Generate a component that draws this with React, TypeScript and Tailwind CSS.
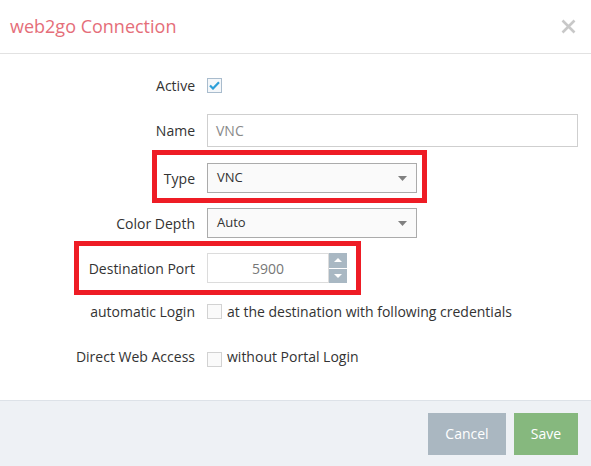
import { useState } from "react"

function Caret() {
  return (
    <svg width="9" height="5" viewBox="0 0 9 5" className="ml-auto">
      <path d="M0 0 L9 0 L4.5 5 Z" fill="#808080" />
    </svg>
  )
}

function Check({ checked, onChange }: { checked: boolean; onChange: () => void }) {
  return (
    <button
      type="button"
      onClick={onChange}
      className={`flex h-[15px] w-[15px] shrink-0 items-center justify-center border ${
        checked ? "border-[#a9bccd] bg-[#f4f7fa]" : "border-[#d2d2d2] bg-[#fafafa]"
      }`}
    >
      {checked && (
        <svg width="11" height="9" viewBox="0 0 11 9">
          <path d="M1 4.5 L4 7.5 L10 1.2" fill="none" stroke="#2b9fd9" strokeWidth="2.2" />
        </svg>
      )}
    </button>
  )
}

function Label({ children, className = "" }: { children: React.ReactNode; className?: string }) {
  return <div className={`w-[207px] shrink-0 pr-[12px] text-right ${className}`}>{children}</div>
}

export default function App() {
  const [active, setActive] = useState(true)
  const [autoLogin, setAutoLogin] = useState(false)
  const [directAccess, setDirectAccess] = useState(false)

  return (
    <div
      className="flex h-[466px] w-[591px] flex-col bg-white text-[14px] text-[#333]"
      style={{ fontFamily: '"Open Sans", "Noto Sans", sans-serif' }}
    >
      {/* header */}
      <div className="flex h-[54px] shrink-0 items-center border-b border-[#e2e2e2] pl-[10px] pr-[15px]">
        <h2 className="text-[18px] text-[#e56e79]">web2go Connection</h2>
        <svg width="15" height="15" viewBox="0 0 15 15" className="ml-auto">
          <path d="M1.5 1.5 L13.5 13.5 M13.5 1.5 L1.5 13.5" stroke="#c8c8c8" strokeWidth="2.6" />
        </svg>
      </div>

      {/* body */}
      <div className="flex flex-1 flex-col">
        <div className="mt-[16px] flex h-[30px] items-center">
          <Label>Active</Label>
          <Check checked={active} onChange={() => setActive(!active)} />
        </div>

        <div className="mt-[14px] flex h-[33px] items-center">
          <Label>Name</Label>
          <div className="flex h-[33px] w-[371px] items-center border border-[#cfcfcf] px-[8px] text-[#8a8a8a]">
            VNC
          </div>
        </div>

        <div className="relative mt-[16px] flex h-[30px] items-center">
          <Label>Type</Label>
          <div className="flex h-[30px] w-[210px] items-center border border-[#ababab] bg-[#fafafa] pl-[9px] pr-[9px] text-[13px]">
            VNC
            <Caret />
          </div>
          <span className="pointer-events-none absolute left-[152px] top-[-13px] h-[53px] w-[275px] border-[5px] border-[#ee1c25]" />
        </div>

        <div className="mt-[15px] flex h-[30px] items-center">
          <Label>Color Depth</Label>
          <div className="flex h-[30px] w-[210px] items-center border border-[#ababab] bg-[#fafafa] pl-[9px] pr-[9px] text-[13px]">
            Auto
            <Caret />
          </div>
        </div>

        <div className="relative mt-[15px] flex h-[30px] items-center">
          <Label>Destination Port</Label>
          <div className="flex h-[30px] w-[122px] items-center justify-center border border-[#dcdcdc] text-[#777]">
            5900
          </div>
          <div className="flex h-[30px] w-[18px] flex-col gap-[1px]">
            <div className="flex flex-1 items-center justify-center bg-[#a9b8c3]">
              <svg width="8" height="4" viewBox="0 0 8 4">
                <path d="M0 4 L8 4 L4 0 Z" fill="#fff" />
              </svg>
            </div>
            <div className="flex flex-1 items-center justify-center bg-[#a9b8c3]">
              <svg width="8" height="4" viewBox="0 0 8 4">
                <path d="M0 0 L8 0 L4 4 Z" fill="#fff" />
              </svg>
            </div>
          </div>
          <span className="pointer-events-none absolute left-[74px] top-[-12px] h-[54px] w-[287px] border-[5px] border-[#ee1c25]" />
        </div>

        <div className="mt-[14px] flex h-[28px] items-center">
          <Label>automatic Login</Label>
          <Check checked={autoLogin} onChange={() => setAutoLogin(!autoLogin)} />
          <span className="ml-[5px]">at the destination with following credentials</span>
        </div>

        <div className="mt-[20px] flex h-[28px] items-center">
          <Label className="-mt-[6px]">Direct Web Access</Label>
          <Check checked={directAccess} onChange={() => setDirectAccess(!directAccess)} />
          <span className="ml-[5px] -mt-[6px]">without Portal Login</span>
        </div>
      </div>

      {/* footer */}
      <div className="flex h-[66px] shrink-0 items-center justify-end gap-[8px] border-t border-[#dde2e8] bg-[#eef1f5] pr-[13px]">
        <button className="h-[42px] w-[78px] bg-[#aab7c1] text-white">Cancel</button>
        <button className="h-[42px] w-[64px] bg-[#86b87e] text-white">Save</button>
      </div>
    </div>
  )
}
